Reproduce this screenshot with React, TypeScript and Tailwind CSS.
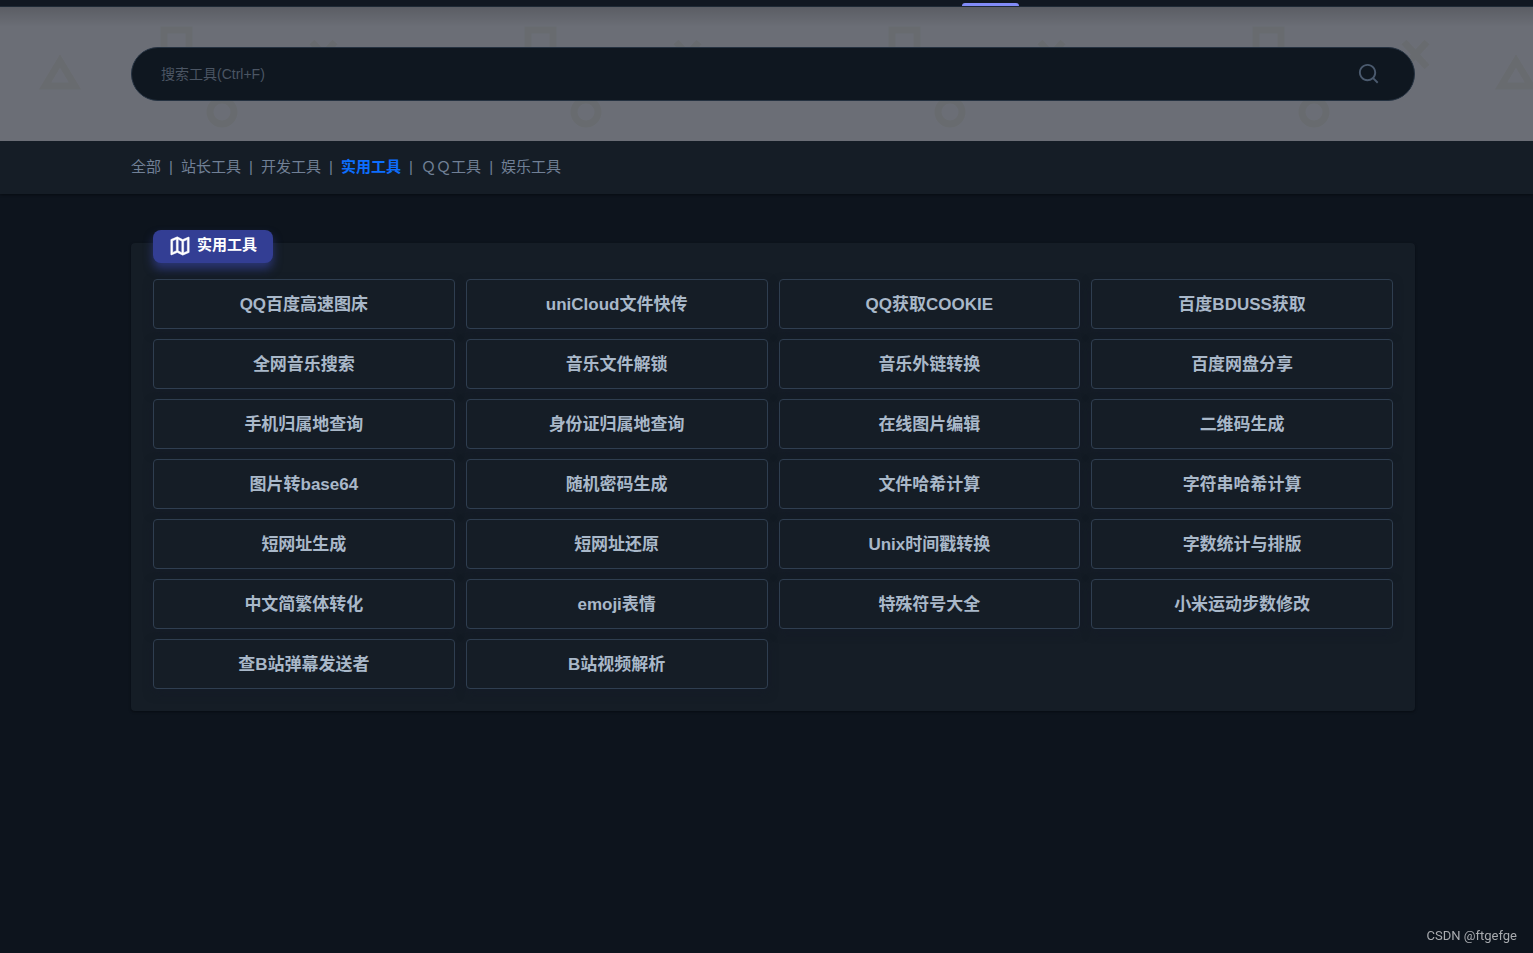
import { RiMap2Line, RiSearchLine } from 'react-icons/ri'

const categories = ['全部', '站长工具', '开发工具', '实用工具', 'ＱＱ工具', '娱乐工具']
const active = '实用工具'

const tools = [
  'QQ百度高速图床',
  'uniCloud文件快传',
  'QQ获取COOKIE',
  '百度BDUSS获取',
  '全网音乐搜索',
  '音乐文件解锁',
  '音乐外链转换',
  '百度网盘分享',
  '手机归属地查询',
  '身份证归属地查询',
  '在线图片编辑',
  '二维码生成',
  '图片转base64',
  '随机密码生成',
  '文件哈希计算',
  '字符串哈希计算',
  '短网址生成',
  '短网址还原',
  'Unix时间戳转换',
  '字数统计与排版',
  '中文简繁体转化',
  'emoji表情',
  '特殊符号大全',
  '小米运动步数修改',
  '查B站弹幕发送者',
  'B站视频解析',
]

function HeroPattern() {
  return (
    <svg className="absolute inset-0 h-full w-full" aria-hidden="true">
      <defs>
        <pattern id="shapes" width="364" height="140" patternUnits="userSpaceOnUse">
          <g fill="none" stroke="#686b6f" strokeWidth="7">
            <path d="M60 54 L75 79 H45 Z" />
            <rect x="164" y="23" width="25" height="28" />
            <circle cx="222" cy="105" r="12" />
            <path d="M312 35 L335 60 M335 35 L312 60" />
          </g>
        </pattern>
      </defs>
      <rect width="100%" height="100%" fill="url(#shapes)" />
    </svg>
  )
}

function SearchHero() {
  return (
    <section className="relative bg-[#6b6e76] py-10 pr-[118px] pl-[131px]">
      <HeroPattern />
      <div className="absolute inset-x-0 top-0 h-5 bg-linear-to-b from-black/15 to-transparent" />
      <form
        className="relative flex h-[54px] items-center rounded-full border border-[#253241] bg-[#0f1720] pr-[30px] pl-[29px]"
        onSubmit={(e) => e.preventDefault()}
      >
        <input
          type="text"
          aria-label="搜索工具"
          placeholder="搜索工具(Ctrl+F)"
          className="min-w-0 flex-1 bg-transparent text-sm text-slate-300 outline-none placeholder:text-[#4b5563]"
        />
        <button type="submit" aria-label="搜索" className="p-1 pb-1.5 text-[#4b5a6e]">
          <RiSearchLine size={23} />
        </button>
      </form>
    </section>
  )
}

function CategoryNav() {
  return (
    <nav className="bg-[#151d26] pr-[118px] pl-[131px] shadow-sm shadow-black/30">
      <ul className="flex h-[53px] items-center text-[15px] text-[#718096]">
        {categories.map((name, i) => (
          <li key={name} className="flex">
            {i > 0 && <span className="w-5 text-center">|</span>}
            <a href="#" className={name === active ? 'font-bold text-[#0d6efd]' : ''}>
              {name}
            </a>
          </li>
        ))}
      </ul>
    </nav>
  )
}

export default function App() {
  return (
    <div className="min-h-screen bg-[#0d141d] font-['Liberation_Sans','Noto_Sans_CJK_SC',sans-serif]">
      <header className="flex h-[7px] items-end border-b border-[#1f2a36] bg-[#111822] pl-[962px]">
        <span className="h-[3px] w-[57px] rounded-t-sm bg-[#818cf8]" />
      </header>
      <SearchHero />
      <CategoryNav />
      <main className="pt-[49px] pr-[118px] pl-[131px]">
        <section className="rounded bg-[#151d26] px-[22px] pb-[22px] shadow-sm shadow-black/30">
          <div className="flex h-9 items-end">
            <h2 className="mb-4 flex h-[33px] w-[120px] items-center gap-1.5 rounded-lg bg-[#333e94] pb-0.5 pl-4 text-[15px] font-bold text-white shadow-[0_6px_10px_#333e94b3]">
              <RiMap2Line size={22} stroke="currentColor" strokeWidth={0.6} />
              实用工具
            </h2>
          </div>
          <div className="grid grid-cols-4 gap-x-[11px] gap-y-2.5">
            {tools.map((name) => (
              <button
                key={name}
                type="button"
                className="h-[50px] rounded border border-[#2f3e50] bg-[#151d26] pt-0.5 text-[17px] font-bold text-[#a9b8c9] shadow-[0_4px_10px_#14192880]"
              >
                {name}
              </button>
            ))}
          </div>
        </section>
      </main>
      <footer className="fixed right-4 bottom-2 font-[Roboto,sans-serif] text-[13px] text-[#a8abaf]">
        CSDN @ftgefge
      </footer>
    </div>
  )
}
